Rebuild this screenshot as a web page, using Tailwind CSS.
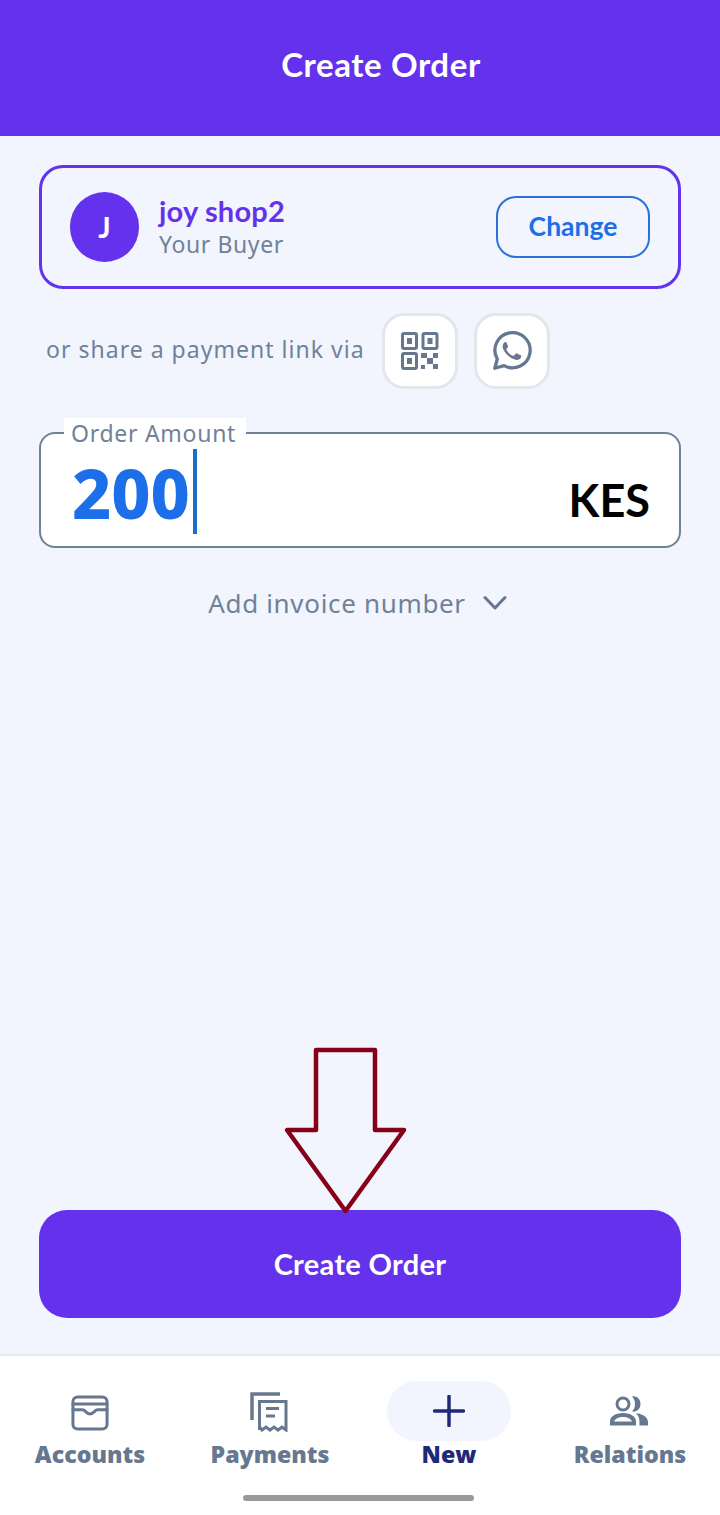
<!DOCTYPE html>
<html lang="en">
<head>
  <meta charset="UTF-8">
  <meta name="viewport" content="width=device-width, initial-scale=1.0">
  <script src="https://cdn.jsdelivr.net/npm/@tailwindcss/browser@4"></script>
  <title>Create Order</title>
</head>
<body>
<div class="relative w-[720px] h-[1515px] overflow-hidden bg-[#f2f5fd] flex flex-col font-['Noto_Sans',sans-serif]">

  <div class="h-[136px] bg-[#6432ec] flex items-center justify-center pl-[42px] pb-[7px]">
    <h1 class="text-white text-[33px] font-bold font-['Lato',sans-serif] tracking-[0.6px]">Create Order</h1>
  </div>

  <div class="flex-1 flex flex-col px-[39px] pt-[29px] pb-[36px]">
    <!-- buyer card -->
    <div class="h-[124px] border-[3px] border-[#6432ec] rounded-[24px] flex items-center pl-[28px] pr-[28px]">
      <div class="w-[69px] h-[70px] rounded-full bg-[#6432ec] text-white text-[29px] font-bold flex items-center justify-center font-['Lato',sans-serif]">J</div>
      <div class="ml-[20px] flex-1 pt-[2px]">
        <div class="text-[#6432ec] text-[29px] leading-[32px] font-bold font-['Lato',sans-serif] tracking-[0.2px]">joy shop2</div>
        <div class="text-[#6f8299] text-[23px] leading-[34px] tracking-[0.6px]">Your Buyer</div>
      </div>
      <div class="w-[154px] h-[62px] border-2 border-[#2a72d8] rounded-[20px] flex items-center justify-center text-[#1c6fe8] text-[26.500px] font-bold font-['Lato',sans-serif]">Change</div>
    </div>

    <!-- share row -->
    <div class="flex items-center mt-[24px] pl-[7px]">
      <span class="text-[#6f8299] text-[23px] tracking-[1.02px] w-[336px] mt-[-3px]">or share a payment link via</span>
      <div class="w-[76px] h-[76px] bg-white border-[3px] border-[#e3e6ec] rounded-[22px] flex items-center justify-center">
        <svg width="38" height="38" viewBox="0 0 38 38" fill="none" stroke="#66788f" stroke-width="3">
          <rect x="1.500" y="1.500" width="14" height="15" rx="1.500"/>
          <rect x="22" y="1.500" width="14" height="15" rx="1.500"/>
          <rect x="1.500" y="21.500" width="14" height="15" rx="1.500"/>
          <g fill="#66788f" stroke="none">
            <rect x="6" y="6" width="5" height="6"/>
            <rect x="26.500" y="6" width="5" height="6"/>
            <rect x="6" y="26" width="5" height="6"/>
            <rect x="20" y="21" width="6" height="5"/>
            <rect x="32" y="21" width="5" height="5"/>
            <rect x="26" y="26" width="6" height="6"/>
            <rect x="20" y="33" width="4" height="4"/>
            <rect x="32" y="32" width="5" height="5"/>
          </g>
        </svg>
      </div>
      <div class="w-[76px] h-[76px] ml-[16px] bg-white border-[3px] border-[#e3e6ec] rounded-[22px] flex items-center justify-center">
        <svg width="44" height="44" viewBox="0 0 24 24" fill="none">
          <path d="M2.600 21.400 4 16.400A9.600 9.600 0 1 1 7.700 20Z" stroke="#66788f" stroke-width="1.800" stroke-linejoin="round"/>
          <path d="M9 6.900c-.4 0-.9.1-1.200.5-.5.6-.9 1.300-.9 2.200 0 1.100.7 2.300 1.800 3.700 1.500 1.800 3.300 3 5.300 3.500 1.200.3 2.300-.2 2.800-1.100.3-.5.3-1 .2-1.200l-2.300-1.200c-.3-.1-.5 0-.7.2l-.8 1c-.2.2-.4.2-.7.1-1.500-.6-2.700-1.700-3.500-3.200-.1-.3-.1-.4.1-.6l.6-.8c.2-.2.2-.4.1-.7l-.9-2.100c-.1-.3-.3-.3-.9-.3Z" fill="#66788f"/>
        </svg>
      </div>
    </div>

    <!-- amount field -->
    <div class="relative mt-[43px] h-[116px] bg-white border-2 border-[#6f8296] rounded-[16px] flex items-center justify-between pl-[31px] pr-[29px]">
      <span class="absolute left-[23px] top-[-16px] h-[28px] w-[182px] pl-[7px] bg-white text-[#6f8299] text-[23px] leading-[30px] tracking-[0.72px]">Order Amount</span>
      <div class="flex items-center mt-[2px]">
        <span class="text-[#1c6fe8] text-[68px] leading-[60px] font-extrabold font-['Noto_Sans',sans-serif] mt-[3px]">200</span>
        <span class="w-[4px] h-[85px] ml-[3px] bg-[#1c6fc8]"></span>
      </div>
      <span class="text-black text-[45px] font-bold font-['Lato',sans-serif] mt-[22px]">KES</span>
    </div>

    <!-- invoice toggle -->
    <div class="flex items-center justify-center mt-[38px] pr-[5px] text-[#6f8299] text-[26px] tracking-[0.67px]">
      <span class="leading-[34px]">Add invoice number</span>
      <svg class="ml-[17px]" width="24" height="16" viewBox="0 0 24 16" fill="none" stroke="#66788f" stroke-width="3" stroke-linecap="round" stroke-linejoin="round">
        <path d="M2 2.500 12 13 22 2.500"/>
      </svg>
    </div>

    <button class="mt-auto h-[108px] bg-[#6432ec] rounded-[28px] text-white text-[29px] font-bold font-['Lato',sans-serif] tracking-[0.3px]">Create Order</button>
  </div>

  <!-- bottom nav -->
  <div class="relative h-[161px] bg-white border-t-2 border-[#e6e8ee] grid grid-cols-4 pt-[25px] px-0">
    <div class="flex flex-col items-center">
      <div class="h-[60px] flex items-center justify-center">
        <svg class="mt-[3px] mr-[1px]" width="38" height="36" viewBox="0 0 40 38" fill="none" stroke="#66788f" stroke-width="3.200" stroke-linejoin="round" stroke-linecap="round">
          <rect x="2" y="2" width="36" height="34" rx="5"/>
          <path d="M2 9.500h36"/>
          <path d="M2 15.500h10c3 0 4 4.500 8 4.500s5-4.500 8-4.500h10"/>
        </svg>
      </div>
      <span class="text-[#66788f] text-[23.200px] leading-[28px] font-extrabold font-['Open_Sans',sans-serif] mt-[-1px]">Accounts</span>
    </div>
    <div class="flex flex-col items-center">
      <div class="h-[60px] flex items-center justify-center pr-[3px]">
        <svg class="mt-[2px]" width="38" height="40" viewBox="0 0 38 40" fill="none" stroke="#66788f" stroke-width="3.500">
          <path d="M2 28V2h28"/>
          <path d="M9.500 38V9.500H36V38l-4-3-4 3-4-3-4 3-4-3-4 3-2.500-3Z" stroke-width="3"/>
          <path d="M16 16.500h13M16 24h9" stroke-width="3"/>
        </svg>
      </div>
      <span class="text-[#66788f] text-[23.200px] leading-[28px] font-extrabold font-['Open_Sans',sans-serif] mt-[-1px]">Payments</span>
    </div>
    <div class="flex flex-col items-center pr-[2px]">
      <div class="w-[124px] h-[60px] rounded-full bg-[#f2f5fd] flex items-center justify-center">
        <svg width="32" height="32" viewBox="0 0 32 32" fill="none" stroke="#1e2a78" stroke-width="3.500" stroke-linecap="round">
          <path d="M16 1.500v29M1.500 16h29"/>
        </svg>
      </div>
      <span class="text-[#1e2a78] text-[23.200px] leading-[28px] font-extrabold font-['Open_Sans',sans-serif] mt-[-1px]">New</span>
    </div>
    <div class="flex flex-col items-center">
      <div class="h-[60px] flex items-center justify-center pr-[2px]">
        <svg width="40" height="30" viewBox="0 0 40 30" fill="#66788f">
          <circle cx="14" cy="8" r="6" fill="none" stroke="#66788f" stroke-width="3"/>
          <path d="M23 .500c5-1 8.500 3 8.500 7.500s-3.500 8.500-8.500 7.500c2-2 3-4.500 3-7.500s-1-5.500-3-7.500Z"/>
          <path d="M1 29.500v-4c0-5 5.500-8.500 13-8.500s13 3.500 13 8.500v4Zm4-4h18c-1-2.500-4.500-4.500-9-4.500s-8 2-9 4.500Z" fill-rule="evenodd"/>
          <path d="M27 17c6.500 1 12 4 12 9v3.500h-8.500V26c0-3.500-1-6.500-3.500-9Z"/>
        </svg>
      </div>
      <span class="text-[#66788f] text-[23.200px] leading-[28px] font-extrabold font-['Open_Sans',sans-serif] mt-[-1px]">Relations</span>
    </div>
    <div class="absolute left-[243px] top-[139px] w-[231px] h-[6px] rounded-full bg-[#999999]"></div>
  </div>

  <!-- red annotation arrow drawn over the screenshot -->
  <svg class="absolute left-[280px] top-[1042px]" width="132" height="176" viewBox="0 0 132 176" fill="none" stroke="#870019" stroke-width="4.500" stroke-linejoin="round">
    <path d="M36 8H95V88H124L65.500 169 7 88H36Z"/>
  </svg>
</div>
</body>
</html>
